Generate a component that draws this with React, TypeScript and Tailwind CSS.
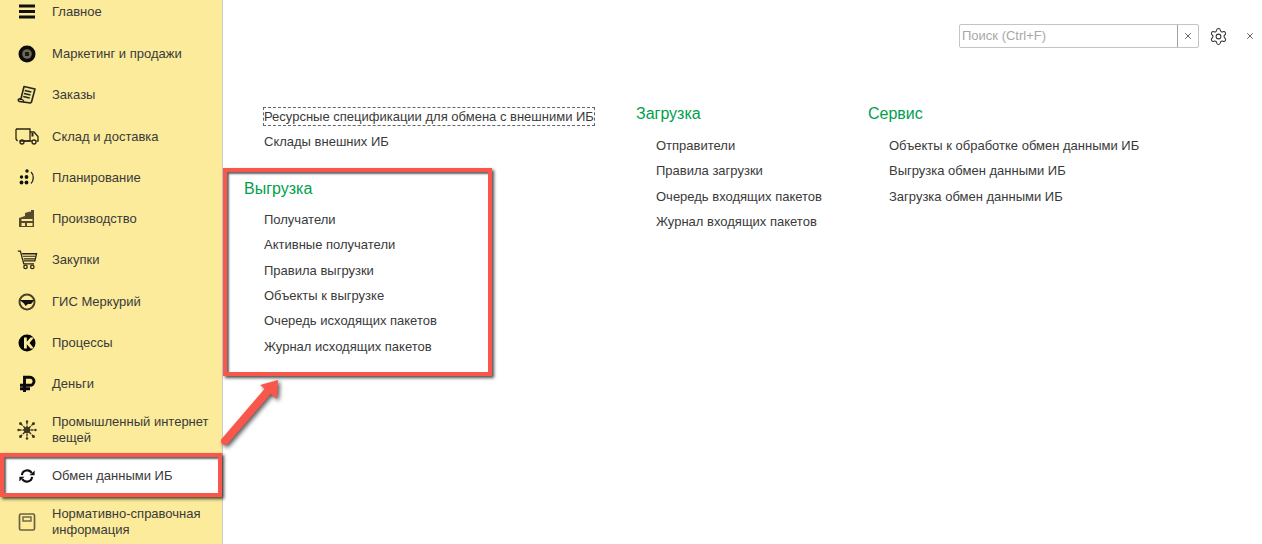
import React from "react";
import { Settings, X } from "lucide-react";

const C = "#2a2416";
type IconProps = { children: React.ReactNode };
const Svg = ({ children }: IconProps) => (
  <svg width="24" height="24" viewBox="0 0 24 24" className="shrink-0">{children}</svg>
);

const icons: Record<string, React.ReactNode> = {
  menu: (
    <Svg>
      <rect x="4" y="4.500" width="16" height="3" fill="#111" />
      <rect x="4" y="10" width="16" height="3" fill="#111" />
      <rect x="4" y="15.500" width="16" height="3" fill="#111" />
    </Svg>
  ),
  disk: (
    <Svg>
      <circle cx="12" cy="12" r="8.500" fill="#0c0c0c" />
      <circle cx="12" cy="12" r="4.800" fill="#6d6a50" />
      <rect x="10" y="10" width="4" height="4" fill="#1a1a1a" />
    </Svg>
  ),
  orders: (
    <Svg>
      <path d="M9 3.500l11 2.500-3.500 13-1 1-11-1.500c-1.500-.5-1.500-2-.5-2.500l2-.5z" fill="#efe3a0" stroke={C} strokeWidth="1.600" strokeLinejoin="round" />
      <path d="M9.800 7.500l6.500 1.500M9 10.500l6.500 1.500M8.200 13.500l6.500 1.500" stroke={C} strokeWidth="1.500" />
      <path d="M5 16.500c2-.5 3.500 0 4 3" fill="none" stroke={C} strokeWidth="1.300" />
    </Svg>
  ),
  truck: (
    <Svg>
      <g transform="translate(0 -1)">
        <path d="M1 5h14v12H4.500M1 5v10l1.500 2" fill="none" stroke={C} strokeWidth="1.300" />
        <path d="M15 8h4l4 4.500V17h-1.500" fill="none" stroke={C} strokeWidth="1.300" />
        <path d="M16.500 9h2v3.500h-2z" fill={C} />
        <path d="M9 17h8" stroke={C} strokeWidth="1.300" />
        <circle cx="7" cy="18" r="2" fill="none" stroke={C} strokeWidth="1.300" />
        <circle cx="19" cy="18" r="2" fill="none" stroke={C} strokeWidth="1.300" />
      </g>
    </Svg>
  ),
  plan: (
    <Svg>
      <circle cx="12" cy="5" r="1.700" fill="#111" />
      <circle cx="6.500" cy="11" r="1.700" fill="#111" />
      <circle cx="11.500" cy="11" r="1.900" fill="#111" />
      <circle cx="6.500" cy="16.500" r="1.900" fill="#111" />
      <circle cx="11.500" cy="16.500" r="1.900" fill="#111" />
      <path d="M16 6c3 2.500 3 9 0 11.500" fill="none" stroke="#222" strokeWidth="1.300" />
    </Svg>
  ),
  factory: (
    <Svg>
      <path d="M4 20V11l6-2V6l5-1.500 1 .5V3h3v17z" fill="#554a2c" />
      <rect x="6.500" y="12" width="11" height="2" fill="#fbeb9b" />
      <rect x="6.500" y="16" width="3.500" height="3" fill="#fbeb9b" />
      <rect x="12" y="16" width="5.500" height="3" fill="#fbeb9b" />
    </Svg>
  ),
  cart: (
    <Svg>
      <g transform="translate(2 1.500) scale(0.85)">
        <path d="M1 2h3l4 15h12" fill="none" stroke={C} strokeWidth="1.500" />
        <path d="M6 5h17l-2 8.500H8" fill="none" stroke={C} strokeWidth="1.500" />
        <path d="M7 8h15M8 11h13" stroke={C} strokeWidth="1.300" />
        <circle cx="10" cy="20.500" r="2" fill="none" stroke={C} strokeWidth="1.500" />
        <circle cx="18" cy="20.500" r="2" fill="none" stroke={C} strokeWidth="1.500" />
      </g>
    </Svg>
  ),
  gis: (
    <Svg>
      <circle cx="12" cy="12" r="7.500" fill="none" stroke="#4a4226" strokeWidth="2" />
      <path d="M4.500 10h15l-3.500 4h-3l-2.500 2-1.500-2.500z" fill="#111" />
    </Svg>
  ),
  k: (
    <Svg>
      <circle cx="12" cy="12" r="8.500" fill="#050505" />
      <path d="M9 6.500h2.800v4.300L15.500 6.500h3.500l-4.500 5.500 4.500 5.500h-3.500l-3.700-4.300v4.300H9z" fill="#fbeb9b" />
    </Svg>
  ),
  ruble: (
    <Svg>
      <path d="M9.500 20V5.300h5.500a4 4 0 0 1 0 8H5M5 16.800h10" fill="none" stroke="#0a0a0a" strokeWidth="2.900" />
    </Svg>
  ),
  iot: (
    <Svg>
      <g stroke="#3d3722" strokeWidth="1.400" strokeDasharray="3 1">
        <path d="M12 3.500v17M3.500 12h17M5.500 5.500l13 13M18.500 5.500l-13 13" />
      </g>
      <circle cx="12" cy="12" r="3.200" fill="#3d3722" />
      <g fill="#3d3722">
        <circle cx="5.500" cy="5.500" r="1.500" />
        <circle cx="18.500" cy="5.500" r="1.500" />
        <circle cx="5.500" cy="18.500" r="1.500" />
        <circle cx="18.500" cy="18.500" r="1.500" />
        <circle cx="12" cy="3.500" r="1.200" />
        <circle cx="12" cy="20.500" r="1.200" />
        <circle cx="3.500" cy="12" r="1.200" />
        <circle cx="20.500" cy="12" r="1.200" />
      </g>
    </Svg>
  ),
  sync: (
    <Svg>
      <g transform="translate(1.800 1.800) scale(0.85)">
        <path d="M6 11a6.200 6.200 0 0 1 11.500-2.500" fill="none" stroke="#111" strokeWidth="2.500" />
        <path d="M15 11h6V5.500z" fill="#111" />
        <path d="M18 13a6.200 6.200 0 0 1-11.500 2.500" fill="none" stroke="#111" strokeWidth="2.500" />
        <path d="M3 13h6l-6 5.500z" fill="#111" />
      </g>
    </Svg>
  ),
  book: (
    <Svg>
      <rect x="4.500" y="4" width="15" height="16" rx="1.500" fill="none" stroke="#6a6140" strokeWidth="1.700" />
      <rect x="8" y="7" width="8" height="4" fill="none" stroke="#6a6140" strokeWidth="1.400" />
    </Svg>
  ),
};

const nav: { icon: string; label: React.ReactNode; h: string }[] = [
  { icon: "menu", label: "Главное", h: "h-[42px]" },
  { icon: "disk", label: "Маркетинг и продажи", h: "h-[41px]" },
  { icon: "orders", label: "Заказы", h: "h-[42px]" },
  { icon: "truck", label: "Склад и доставка", h: "h-[41px]" },
  { icon: "plan", label: "Планирование", h: "h-[41px]" },
  { icon: "factory", label: "Производство", h: "h-[41px]" },
  { icon: "cart", label: "Закупки", h: "h-[42px]" },
  { icon: "gis", label: "ГИС Меркурий", h: "h-[41px]" },
  { icon: "k", label: "Процессы", h: "h-[41px]" },
  { icon: "ruble", label: "Деньги", h: "h-[41px]" },
  { icon: "iot", label: <>Промышленный интернет<br />вещей</>, h: "h-[51px]" },
  { icon: "sync", label: "Обмен данными ИБ", h: "h-[42px] bg-white" },
  { icon: "book", label: <>Нормативно-справочная<br />информация</>, h: "h-[50px]" },
];

const Link = ({ children, focus }: { children: React.ReactNode; focus?: boolean }) => (
  <div className="h-[25.4px] flex items-center">
    <span className={focus ? "outline-1 outline-dashed outline-[#666] leading-[17px]" : ""}>{children}</span>
  </div>
);

const Heading = ({ children, className = "" }: { children: React.ReactNode; className?: string }) => (
  <div className={`text-[16px] text-[#00a04e] leading-5 ${className}`}>{children}</div>
);

export default function App() {
  return (
    <div className="relative w-[1262px] h-[544px] overflow-hidden bg-white flex text-[13px] text-[#3a3a3a] font-['Liberation_Sans',Arial,sans-serif]">
      <aside className="w-[223px] h-full shrink-0 bg-[#fbeb9b] border-r border-[#c9c9c9] overflow-hidden">
        <div className="-mt-[9px]">
          {nav.map((n, i) => (
            <div key={i} className={`flex items-center pl-[15px] ${n.h}`}>
              {icons[n.icon]}
              <div className="ml-[13px] leading-[16px]">{n.label}</div>
            </div>
          ))}
        </div>
      </aside>

      <main className="flex-1 flex flex-col">
        <div className="flex items-center h-[48px] mt-[12px] pr-[5px] justify-end">
          <div className="flex w-[240px] h-[24px] border border-[#c4c4c4] rounded-[2px] items-stretch">
            <div className="flex-1 pl-[2px] text-[#a8a8a8] flex items-center border-r border-[#a0a0a0]">Поиск (Ctrl+F)</div>
            <div className="w-[20px] flex items-center justify-center text-[#444]"><X size={10} strokeWidth={2} /></div>
          </div>
          <Settings size={19} strokeWidth={1.300} className="ml-[10px] text-[#333]" />
          <X size={10} strokeWidth={2} className="ml-[17px] mr-[2px] text-[#444]" />
        </div>

        <div className="flex pl-[21px] mt-[44px]">
          <div className="w-[392px]">
            <div className="pl-[20px]">
              <Link focus>Ресурсные спецификации для обмена с внешними ИБ</Link>
              <Link>Склады внешних ИБ</Link>
            </div>
            <Heading className="mt-[24px]">Выгрузка</Heading>
            <div className="pl-[20px] mt-[8px]">
              <Link>Получатели</Link>
              <Link>Активные получатели</Link>
              <Link>Правила выгрузки</Link>
              <Link>Объекты к выгрузке</Link>
              <Link>Очередь исходящих пакетов</Link>
              <Link>Журнал исходящих пакетов</Link>
            </div>
          </div>
          <div className="w-[232px]">
            <Heading>Загрузка</Heading>
            <div className="pl-[20px] mt-[9px]">
              <Link>Отправители</Link>
              <Link>Правила загрузки</Link>
              <Link>Очередь входящих пакетов</Link>
              <Link>Журнал входящих пакетов</Link>
            </div>
          </div>
          <div>
            <Heading>Сервис</Heading>
            <div className="pl-[21px] mt-[9px]">
              <Link>Объекты к обработке обмен данными ИБ</Link>
              <Link>Выгрузка обмен данными ИБ</Link>
              <Link>Загрузка обмен данными ИБ</Link>
            </div>
          </div>
        </div>
      </main>

      {/* Annotation overlays */}
      <div className="absolute left-0 top-[453px] w-[222px] h-[44px] border-[4px] border-[#f9564c] shadow-[2px_2px_3px_rgba(0,0,0,0.7),inset_2px_2px_2px_rgba(0,0,0,0.6)]" />
      <div className="absolute left-[223px] top-[168px] w-[269px] h-[208px] border-[4px] border-[#f9564c] shadow-[2px_2px_3px_rgba(0,0,0,0.7),inset_2px_2px_2px_rgba(0,0,0,0.6)]" />
      <svg className="absolute left-[215px] top-[372px] [filter:drop-shadow(2px_2px_2px_rgba(0,0,0,0.65))]" width="75" height="80" viewBox="215 372 75 80">
        <path d="M225 441L268 391" stroke="#f9564c" strokeWidth="8" strokeLinecap="round" />
        <path d="M278 380L260 385L277 399z" fill="#f9564c" />
      </svg>
    </div>
  );
}
